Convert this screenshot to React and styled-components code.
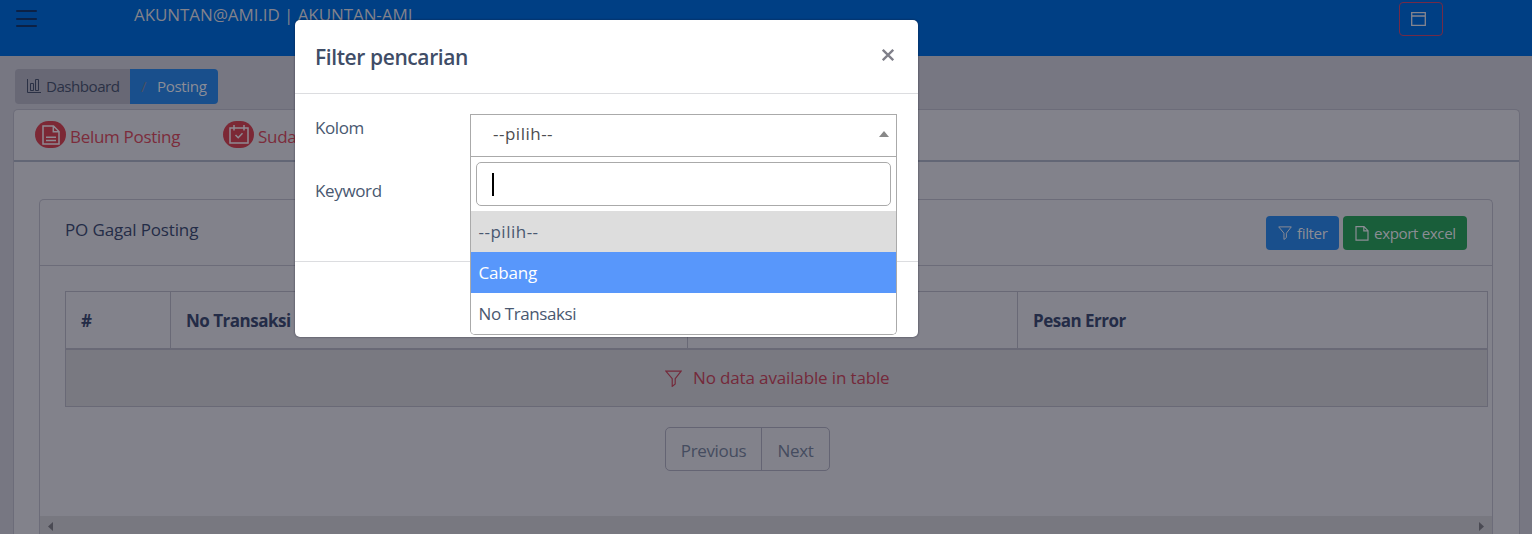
import React from "react";
import styled, { createGlobalStyle } from "styled-components";

const Global = createGlobalStyle`
  * { box-sizing: border-box; }
  html, body { margin: 0; height: 534px; overflow: hidden; background: #777782; }
  body { font-family: "Open Sans", "Noto Sans", sans-serif; font-size: 17px; color: #242c47; }
  svg { display: block; flex: none; }
`;

const Page = styled.div`
  position: relative;
  height: 534px;
  overflow: hidden;
  display: flex;
  flex-direction: column;
`;

const Label = styled.span`
  display: block;
  white-space: nowrap;
  font-size: ${(p) => p.$size || 17}px;
  letter-spacing: ${(p) => p.$track || 0}px;
  line-height: 24px;
`;
const TabText = styled(Label)`
  padding-top: 15px;
`;

const TopBar = styled.header`
  flex: none;
  height: 56px;
  background: #003f84;
  display: flex;
  align-items: flex-start;
  padding: 0 89px 0 16px;
  color: #82828b;
`;
const Burger = styled.div`
  width: 21px;
  margin: 10px 97px 0 0;
  display: flex;
  flex-direction: column;
  gap: 5.5px;
`;
const BurgerLine = styled.i`
  height: 2px;
  border-radius: 1px;
  background: #0c2145;
`;
const Account = styled.div`
  padding-top: 3px;
  flex: 1;
`;
const WindowButton = styled.button`
  width: 44px;
  height: 34px;
  margin-top: 2px;
  padding: 0 0 0 11px;
  border: 1px solid #732b47;
  border-radius: 4px;
  background: none;
  color: #85858e;
  display: flex;
  align-items: center;
`;

const Crumbs = styled.nav`
  flex: none;
  display: flex;
  width: 203px;
  height: 35px;
  margin: 13px 0 5px 15px;
  border-radius: 4px;
  overflow: hidden;
`;
const Crumb = styled.div`
  width: ${(p) => p.$w}px;
  padding: 0 0 1px 11px;
  display: flex;
  align-items: center;
  gap: ${(p) => p.$gap || 0}px;
  background: ${(p) => (p.$active ? "#194f8c" : "#686875")};
  color: ${(p) => (p.$active ? "#8b8d97" : "#2b3145")};
`;
const Slash = styled.span`
  width: 16px;
  font-size: 15px;
  color: #4b5163;
`;

const Card = styled.main`
  flex: 1;
  margin: 0 12px 0 13px;
  border: 1px solid #6c6c79;
  border-bottom: 0;
  border-radius: 5px 5px 0 0;
  background: #82828b;
  display: flex;
  flex-direction: column;
`;
const Tabs = styled.div`
  flex: none;
  height: 52px;
  border-bottom: 2px solid #626675;
  padding-left: 21px;
  display: flex;
  gap: 43px;
`;
const Tab = styled.div`
  display: flex;
  gap: 4px;
  color: #7c2c3b;
`;
const TabBadge = styled.span`
  width: 31px;
  height: 27px;
  margin-top: 11px;
  border-radius: 14px;
  background: #7c2835;
  color: #8e8a92;
  display: flex;
  align-items: center;
  justify-content: center;
`;

const Panel = styled.section`
  flex: 1;
  margin: 37px 26px 0 25px;
  border: 1px solid #6c6c79;
  border-bottom: 0;
  border-radius: 5px 5px 0 0;
  display: flex;
  flex-direction: column;
`;
const PanelHead = styled.div`
  flex: none;
  height: 66px;
  border-bottom: 1px solid #6c6c79;
  padding: 0 25px;
  display: flex;
  align-items: flex-start;
`;
const PanelTitle = styled.div`
  flex: 1;
  padding-top: 18px;
`;
const Action = styled.button`
  width: ${(p) => p.$w}px;
  height: 34px;
  margin: 16px 0 0 4px;
  padding: 0 0 0 ${(p) => p.$pad}px;
  border: 0;
  border-radius: 4px;
  background: ${(p) => p.$bg};
  color: #8c8d95;
  font-family: inherit;
  display: flex;
  align-items: center;
  gap: 5px;
`;

const Table = styled.div`
  flex: none;
  width: 1423px;
  margin: 25px 0 0 25px;
  border: 1px solid #696976;
`;
const HeadRow = styled.div`
  display: grid;
  grid-template-columns: 104px 517px 330px 1fr;
  height: 58px;
  border-bottom: 2px solid #696976;
`;
const HeadCell = styled.div`
  padding: 17px 0 0 15px;
  font-weight: 700;
  & + & { border-left: 1px solid #696976; }
`;
const EmptyRow = styled.div`
  height: 56px;
  background: #797981;
  color: #74293a;
  display: flex;
  align-items: center;
  padding-left: 599px;
  gap: 11px;
`;

const Pager = styled.div`
  flex: none;
  align-self: flex-start;
  margin: 20px 0 45px 625px;
  height: 44px;
  border: 1px solid #646473;
  border-radius: 5px;
  display: flex;
  color: #454c5f;
`;
const PageButton = styled.div`
  width: ${(p) => p.$w}px;
  display: flex;
  align-items: center;
  justify-content: center;
  padding-top: 3px;
  & + & { border-left: 1px solid #646473; }
`;
const ScrollTrack = styled.div`
  flex: 1;
  background: #787880;
  display: flex;
  justify-content: space-between;
  align-items: center;
  padding: 2px 8px 0 8px;
  color: #4a4a53;
`;

const Modal = styled.div`
  position: absolute;
  left: 295px;
  top: 20px;
  width: 623px;
  height: 317px;
  border-radius: 5px;
  background: #fff;
  color: #495870;
  box-shadow: 0 0 2px rgba(20, 20, 40, 0.7);
  display: flex;
  flex-direction: column;
`;
const ModalHead = styled.div`
  flex: none;
  height: 74px;
  border-bottom: 1px solid #dcdde0;
  padding: 25px 24px 0 20px;
  display: flex;
  justify-content: space-between;
  color: #3f4d67;
  font-weight: 600;
`;
const CloseButton = styled.span`
  padding-top: 4px;
  color: #7f7f89;
`;
const ModalBody = styled.div`
  flex: none;
  height: 168px;
  border-bottom: 1px solid #dcdde0;
  padding: 20px 21px 0 20px;
  display: grid;
  grid-template-columns: 155px 427px;
  align-items: start;
`;
const Fields = styled.div`
  padding-top: 2px;
  display: grid;
  gap: 39px;
`;
const Select = styled.div`
  height: 220px;
`;
const SelectValue = styled.div`
  height: 43px;
  border: 1px solid #aaa;
  padding: 0 7px 4px 22px;
  display: flex;
  align-items: center;
  justify-content: space-between;
  color: #4d4d50;
`;
const Menu = styled.div`
  position: relative;
  z-index: 1;
  height: 178px;
  border: 1px solid #aaa;
  border-top: 0;
  border-radius: 0 0 5px 5px;
  background: #fff;
  overflow: hidden;
`;
const Search = styled.div`
  height: 44px;
  margin: 5px;
  border: 1px solid #aaa;
  border-radius: 5px;
  padding: 10px 15px;
`;
const Caret = styled.i`
  display: block;
  width: 2px;
  height: 23px;
  background: #000;
`;
const Option = styled.div`
  height: 41px;
  padding: 0 7.5px;
  display: flex;
  align-items: center;
  background: ${(p) => p.$bg || "#fff"};
  color: ${(p) => p.$fg || "#495870"};
`;

const Funnel = ({ size }) => (
  <svg width={size} height={size} viewBox="0 0 16 16" fill="none" stroke="currentColor" strokeWidth="1.1">
    <path d="M.8 1h14.4L9.6 8.2v5L6.8 15.4V8.2z" />
  </svg>
);
const FileIcon = () => (
  <svg width="14" height="15" viewBox="0 0 14 15" fill="none" stroke="currentColor" strokeWidth="1.2">
    <path d="M1 .7h8l4 4v9.4H1zM8.8.8v4.1H13" />
  </svg>
);
const ChartIcon = () => (
  <svg width="15" height="15" viewBox="0 0 15 15" fill="none" stroke="currentColor" strokeWidth="1">
    <path d="M1.5 0v13.5H15M4.5 4.5h3v7h-3zM9.5 .5h3v11h-3z" />
  </svg>
);
const WindowIcon = () => (
  <svg width="15" height="14" viewBox="0 0 15 14" fill="none" stroke="currentColor" strokeWidth="1.3">
    <path d="M.7.7h13.6v12.6H.7zM.7 4h13.6" />
  </svg>
);
const DocIcon = () => (
  <svg width="18" height="20" viewBox="0 0 18 20" fill="none" stroke="currentColor" strokeWidth="1.5">
    <path d="M1 1h10.5L17 6.5V19H1zM11.3 1v5.8H17M4 12.2h10M4 15.6h10" />
  </svg>
);
const CalendarIcon = () => (
  <svg width="20" height="19" viewBox="0 0 20 19" fill="none" stroke="currentColor" strokeWidth="1.5">
    <path d="M1 3h18v15H1zM5 0v5.5M15 0v5.5M6.5 10l2.7 2.7 4.3-4.4" />
  </svg>
);
const Arrow = ({ d, w, h, fill }) => (
  <svg width={w} height={h} viewBox={`0 0 ${w} ${h}`}>
    <path d={d} fill={fill || "currentColor"} />
  </svg>
);

export default function App() {
  return (
    <Page>
      <Global />
      <TopBar>
        <Burger><BurgerLine /><BurgerLine /><BurgerLine /></Burger>
        <Account><Label $track={-0.08}>AKUNTAN@AMI.ID | AKUNTAN-AMI</Label></Account>
        <WindowButton><WindowIcon /></WindowButton>
      </TopBar>
      <Crumbs>
        <Crumb $w={115} $gap={5}><ChartIcon /><Label $size={15.2} $track={-0.55}>Dashboard</Label></Crumb>
        <Crumb $w={88} $active><Slash>/</Slash><Label $size={15.2} $track={-0.4}>Posting</Label></Crumb>
      </Crumbs>
      <Card>
        <Tabs>
          <Tab><TabBadge><DocIcon /></TabBadge><TabText $track={-0.3}>Belum Posting</TabText></Tab>
          <Tab><TabBadge><CalendarIcon /></TabBadge><TabText $track={-0.3}>Suda</TabText></Tab>
        </Tabs>
        <Panel>
          <PanelHead>
            <PanelTitle><Label $track={-0.15}>PO Gagal Posting</Label></PanelTitle>
            <Action $w={73} $pad={12} $bg="#194f8c"><Funnel size={14} /><Label $size={15.2} $track={-0.4}>filter</Label></Action>
            <Action $w={124} $pad={12} $bg="#195e3a"><FileIcon /><Label $size={15.2} $track={-0.4}>export excel</Label></Action>
          </PanelHead>
          <Table>
            <HeadRow>
              <HeadCell><Label>#</Label></HeadCell>
              <HeadCell><Label $track={-0.5}>No Transaksi</Label></HeadCell>
              <HeadCell />
              <HeadCell><Label $track={-0.5}>Pesan Error</Label></HeadCell>
            </HeadRow>
            <EmptyRow><Funnel size={17} /><Label $track={-0.14}>No data available in table</Label></EmptyRow>
          </Table>
          <Pager>
            <PageButton $w={95}><Label $track={-0.35}>Previous</Label></PageButton>
            <PageButton $w={68}><Label $track={-0.3}>Next</Label></PageButton>
          </Pager>
          <ScrollTrack>
            <Arrow w={5} h={9} d="M5 0v9L0 4.5z" />
            <Arrow w={5} h={9} d="M0 0v9l5-4.5z" />
          </ScrollTrack>
        </Panel>
      </Card>

      <Modal>
        <ModalHead>
          <Label $size={21} $track={-0.4}>Filter pencarian</Label>
          <CloseButton>
            <svg width="12" height="12" viewBox="0 0 12 12" stroke="currentColor" strokeWidth="2.3">
              <path d="M.8.8l10.4 10.4M11.2.8L.8 11.2" />
            </svg>
          </CloseButton>
        </ModalHead>
        <ModalBody>
          <Fields>
            <Label $track={-0.4}>Kolom</Label>
            <Label $track={-0.35}>Keyword</Label>
          </Fields>
          <Select>
            <SelectValue>
              <Label $track={0.5}>--pilih--</Label>
              <Arrow w={10} h={6} d="M5 0l5 6H0z" fill="#888" />
            </SelectValue>
            <Menu>
              <Search><Caret /></Search>
              <Option $bg="#ddd"><Label $track={0.5}>--pilih--</Label></Option>
              <Option $bg="#5897fb" $fg="#fff"><Label $track={-0.2}>Cabang</Label></Option>
              <Option><Label $track={-0.4}>No Transaksi</Label></Option>
            </Menu>
          </Select>
        </ModalBody>
      </Modal>
    </Page>
  );
}
